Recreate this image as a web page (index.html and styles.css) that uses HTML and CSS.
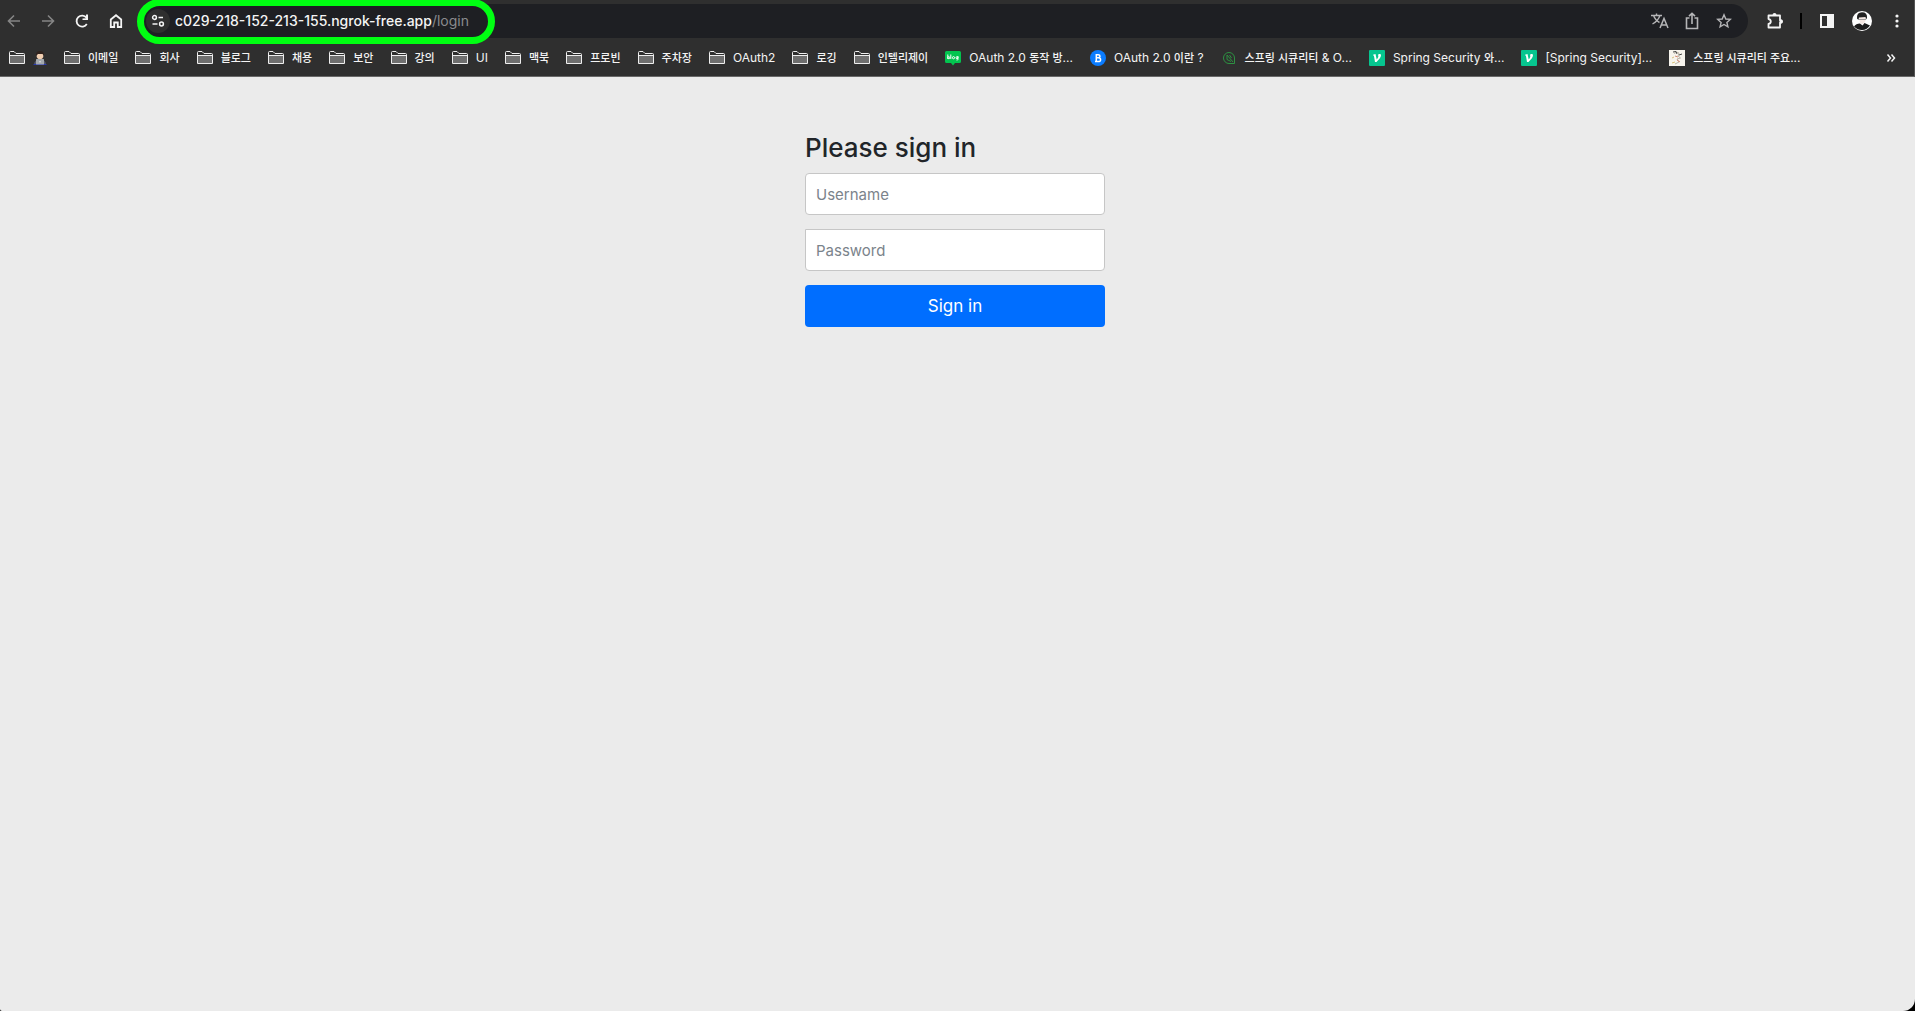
FILE: index.html
```html
<!DOCTYPE html>
<html lang="ko">
<head>
<meta charset="utf-8">
<title>Please sign in</title>
<link rel="stylesheet" href="styles.css">
</head>
<body>
<svg class="defs" aria-hidden="true">
  <symbol id="folder" viewBox="0 0 16 14">
    <path d="M1 5H15V12.500H1Z" fill="#6f6f6f"/>
    <path d="M.5 12.500V1.500Q.5.500 1.500.500H5L7 2.500H14.500Q15.500 2.500 15.500 3.500V12.500H.5ZM.5 4.500H15.500" fill="none" stroke="#eee"/>
  </symbol>
  <symbol id="velog" viewBox="0 0 16 16">
    <rect width="16" height="16" rx="1" fill="#06c58f"/>
    <path d="M4 4.700L6.500 4 7.700 9.500C9.300 7.500 9.800 6.300 9 5 9.500 3.700 12 3.500 12 5.300 12 7.500 9.500 10 7.500 12H6L4.900 5.600H4Z" fill="#fff"/>
  </symbol>
</svg>
<header class="browser">
  <div class="toolbar">
    <nav class="nav" aria-label="Navigation">
      <button class="icon dim" aria-label="Back"><svg viewBox="0 0 16 16"><path d="M14 8H2.500M8 2.500L2.500 8 8 13.500"/></svg></button>
      <button class="icon dim" aria-label="Forward"><svg viewBox="0 0 16 16"><path d="M2 8H13.500M8 2.500L13.500 8 8 13.500"/></svg></button>
      <button class="icon" aria-label="Reload"><svg viewBox="0 0 16 16"><path d="M12.800 11A5.500 5.500 0 1 1 12.500 4.800L13.500 6" stroke-width="1.800"/><path d="M14 1.500V7H8.500V5.500L12 5.200V1.500Z" fill="currentColor" stroke="none"/></svg></button>
      <button class="icon" aria-label="Home"><svg viewBox="0 0 16 16"><path d="M2.800 6.500L8 2.200 13.200 6.500V14H9.800V9.500H6.200V14H2.800Z" stroke-width="1.800"/></svg></button>
    </nav>
    <div class="omnibox">
      <button class="site-info" aria-label="Site information"><svg viewBox="0 0 16 16"><path d="M8.500 4.500H13M2.500 11H7.500" stroke-width="1.600"/><circle cx="4.500" cy="4.500" r="1.900"/><circle cx="11.500" cy="11" r="1.900"/></svg></button>
      <div class="url" role="textbox" aria-label="Address" contenteditable="true" spellcheck="false"><span class="host">c029-218-152-213-155.ngrok-free.app</span><span class="path">/login</span></div>
      <div class="actions">
        <button class="icon" aria-label="Translate"><svg class="wide" viewBox="0 0 18 18"><path d="M0 3.500H11M5.500 1.500V3.500M2.500 3.500Q4.500 8.500 8.500 10.500M9 3.500Q7 9 1.500 12" stroke-width="1.400"/><path d="M9 16L13 6.500 17 16M10.500 13H15.500" stroke-width="1.500"/></svg></button>
        <button class="icon" aria-label="Share"><svg class="wide" viewBox="0 0 18 18"><path d="M6.500 6H3.500V16.500H14.500V6H11.500M9 12V1.500M6 4.200L9 1.300 12 4.200"/></svg></button>
        <button class="icon" aria-label="Bookmark"><svg viewBox="0 0 16 16"><path d="M8 1.800L9.800 6 14.300 6.400 10.900 9.400 11.900 13.800 8 11.500 4.100 13.800 5.100 9.400 1.700 6.400 6.200 6Z" stroke-width="1.400"/></svg></button>
      </div>
      <span class="highlight"></span>
    </div>
    <div class="tools">
      <button class="icon" aria-label="Extensions"><svg class="wide" viewBox="0 0 18 18"><path d="M2.500 3.500H14V8.500H15.500V10.500H14V15.500H2.500V12Q4.800 11.500 4.800 9.500T2.500 7Z" stroke-width="1.800" stroke-linejoin="round"/><path d="M6.500 3Q6.500 1 8.500 1T10.500 3ZM14.500 7.500Q17 7.500 17 9.500T14.500 11.500Z" fill="currentColor" stroke="none"/></svg></button>
      <span class="divider"></span>
      <button class="icon" aria-label="Side panel"><svg viewBox="0 0 16 16"><path d="M1 1H15V15H1ZM3 3V13H8V3Z" fill="currentColor" fill-rule="evenodd" stroke="none"/></svg></button>
      <button class="icon avatar" aria-label="Profile"><svg viewBox="0 0 20 20"><circle cx="10" cy="10" r="10" fill="#fff" stroke="none"/><path d="M2 15.500Q4 12.500 8 12.500L10.500 14.500 12.500 12 18 14.500A10 10 0 0 1 2 15.500Z" fill="#1b1b1b" stroke="none"/><path d="M7 6H13.500L13.500 10 11 13.500 8 12Z" fill="#f4e7e2" stroke="none"/><path d="M5 7.500Q4.500 1.200 10 1.200T15 7L14 8.500 13.500 6 7 6.500 6.500 9Z" fill="#222" stroke="none"/><path d="M7 8.500H14" stroke="#888" stroke-width=".8"/></svg></button>
      <button class="icon" aria-label="Menu"><svg viewBox="0 0 16 16"><g fill="currentColor" stroke="none"><circle cx="8" cy="3" r="1.600"/><circle cx="8" cy="8" r="1.600"/><circle cx="8" cy="13" r="1.600"/></g></svg></button>
    </div>
  </div>
  <nav class="bookmarks" aria-label="Bookmarks">
    <a href="#" aria-label="Developer"><svg class="mark"><use href="#folder"/></svg><svg class="person" viewBox="0 0 14 14"><path d="M1 14Q1 8.500 7 8.500T13 14Z" fill="#535768"/><path d="M.5 13.500H13.500" stroke="#2638b0"/><circle cx="7" cy="4.800" r="3.400" fill="#f1cfb2"/><path d="M3 5Q2.500 0 7 0T11 5L9.500 3H5Z" fill="#30231e"/><rect x="3" y="8" width="8" height="5.500" rx=".5" fill="#a3a8ad"/><circle cx="7" cy="10.700" r=".8" fill="#e5e5e5"/></svg></a>
    <a href="#"><svg class="mark"><use href="#folder"/></svg><span class="ko">이메일</span></a>
    <a href="#"><svg class="mark"><use href="#folder"/></svg><span class="ko">회사</span></a>
    <a href="#"><svg class="mark"><use href="#folder"/></svg><span class="ko">블로그</span></a>
    <a href="#"><svg class="mark"><use href="#folder"/></svg><span class="ko">채용</span></a>
    <a href="#"><svg class="mark"><use href="#folder"/></svg><span class="ko">보안</span></a>
    <a href="#"><svg class="mark"><use href="#folder"/></svg><span class="ko">강의</span></a>
    <a href="#"><svg class="mark"><use href="#folder"/></svg><span>UI</span></a>
    <a href="#"><svg class="mark"><use href="#folder"/></svg><span class="ko">맥북</span></a>
    <a href="#"><svg class="mark"><use href="#folder"/></svg><span class="ko">프로빈</span></a>
    <a href="#"><svg class="mark"><use href="#folder"/></svg><span class="ko">주차장</span></a>
    <a href="#"><svg class="mark"><use href="#folder"/></svg><span>OAuth2</span></a>
    <a href="#"><svg class="mark"><use href="#folder"/></svg><span class="ko">로깅</span></a>
    <a href="#"><svg class="mark"><use href="#folder"/></svg><span class="ko">인텔리제이</span></a>
    <a href="#"><svg class="favicon" viewBox="0 0 16 16"><path d="M1.500 1H14.500Q16 1 16 2.500V11.500Q16 13 14.500 13H10L8 15.500 6 13H1.500Q0 13 0 11.500V2.500Q0 1 1.500 1Z" fill="#03c44f"/><path d="M2.800 4.500V9M5.800 4.500V9M12.900 6V9.500Q12.900 10.300 11.500 10" fill="none" stroke="#fff"/><g fill="none" stroke="#fff"><circle cx="3.800" cy="7.700" r="1"/><circle cx="8.500" cy="7.700" r="1.100"/><circle cx="12" cy="7.700" r="1"/></g></svg><span>OAuth 2.0 <span class="ko">동작 방</span>...</span></a>
    <a href="#"><svg class="favicon" viewBox="0 0 16 16"><circle cx="8" cy="8" r="8" fill="#0a7cff"/><path d="M6.300 4V12M6 4.700H8.200Q10 4.700 10 6.200T8.200 7.800H6.500M8.200 7.800Q10.600 7.800 10.600 9.700T8.200 11.500H5" fill="none" stroke="#fff" stroke-width="1.500"/></svg><span>OAuth 2.0 <span class="ko">이란</span> ?</span></a>
    <a href="#"><svg class="favicon" viewBox="0 0 16 16"><path d="M13.500 13.500H8A5.500 5.500 0 1 1 13.500 8ZM6 5V9.500M6 5L12 12M6 9.500L10 11.500M8.500 5L10.500 8" fill="none" stroke="#2d9142"/></svg><span><span class="ko">스프링 시큐리티</span> &amp; O...</span></a>
    <a href="#"><svg class="favicon"><use href="#velog"/></svg><span>Spring Security <span class="ko">와</span>...</span></a>
    <a href="#"><svg class="favicon"><use href="#velog"/></svg><span>[Spring Security]...</span></a>
    <a href="#"><svg class="favicon" viewBox="0 0 16 16"><rect width="16" height="16" fill="#f7f4ed"/><path d="M5 3.500Q8 1 10 3L9 6 11.500 8 8 9 10 12 6 14" fill="none" stroke="#b9b3a6"/><path d="M4 2L7 1.500 8 4M10 5L13 4" fill="none" stroke="#444"/><path d="M6 6L9 7M8 10L11 12" stroke="#d78b76"/><path d="M3 8L5 7M3 13L6 12" stroke="#d9c27a"/></svg><span><span class="ko">스프링 시큐리티 주요</span>...</span></a>
    <button class="more" aria-label="More bookmarks"><svg viewBox="0 0 10 10"><path d="M1.500 1.500L4.500 5 1.500 8.500M5.500 1.500L8.500 5 5.500 8.500"/></svg></button>
  </nav>
</header>
<main class="page">
  <form class="signin">
    <h1>Please sign in</h1>
    <input type="text" aria-label="Username" placeholder="Username">
    <input class="joined" type="password" aria-label="Password" placeholder="Password">
    <button class="submit" type="submit">Sign in</button>
  </form>
</main>
</body>
</html>
```
FILE: styles.css
```css
* { box-sizing: border-box; }
body {
  margin: 0;
  min-height: 100vh;
  display: flex;
  flex-direction: column;
  background: #000;
  font-family: Inter, "Noto Sans CJK KR", sans-serif;
  overflow-x: hidden;
}
button { border: 0; padding: 0; background: none; color: inherit; font: inherit; }
.defs { position: absolute; width: 0; height: 0; }

.browser {
  background: #2f2f2f;
  color: #f4f4f4;
  border-right: 1px solid #555;
  border-bottom: 1px solid #686868;
}
.toolbar { display: flex; align-items: center; height: 42px; padding: 4px 9px 4px 6px; }
.nav { display: flex; gap: 18px; padding-right: 18px; }
.icon { display: flex; align-items: center; justify-content: center; width: 16px; height: 20px; }
.icon svg { width: 16px; height: 16px; flex: none; fill: none; stroke: currentColor; stroke-width: 1.6px; }
.icon .wide { width: 18px; height: 18px; }
.dim { color: #858585; }

.omnibox {
  position: relative;
  flex: 1;
  display: flex;
  align-items: center;
  height: 34px;
  padding: 0 16px 0 4px;
  border-radius: 17px;
  background: #1e1f23;
}
.site-info {
  display: flex;
  align-items: center;
  justify-content: center;
  width: 24px;
  height: 24px;
  border-radius: 50%;
  background: #2f2f2f;
}
.site-info svg { width: 16px; height: 16px; fill: none; stroke: currentColor; stroke-width: 1.5px; }
.url { flex: 1; padding-left: 5px; font-size: 14px; line-height: 20px; white-space: nowrap; outline: 0; }
.host { font-weight: 500; }
.path { color: #8a8b8e; }
.actions { display: flex; gap: 16px; color: #b5b5b7; }
.highlight {
  position: absolute;
  top: -5px;
  left: -5px;
  width: 358px;
  height: 45px;
  border: 7px solid #00ff12;
  border-radius: 23px;
  pointer-events: none;
}
.tools { display: flex; align-items: center; gap: 17px; padding-left: 19px; }
.divider { width: 2px; height: 16px; background: #000; }
.icon.avatar { width: 20px; }
.icon.avatar svg { width: 20px; height: 20px; }

.bookmarks {
  display: flex;
  align-items: center;
  gap: 17px;
  height: 34px;
  padding: 0 18px 2px 9px;
  font-size: 12px;
  line-height: 16px;
}
.bookmarks a { display: flex; align-items: center; gap: 8px; color: inherit; text-decoration: none; white-space: nowrap; }
.ko { font-size: 11px; font-weight: 500; }
.mark { width: 16px; height: 14px; }
.favicon { width: 16px; height: 16px; }
.person { width: 14px; height: 14px; }
.more { margin-left: auto; }
.more svg { display: block; width: 10px; height: 10px; fill: none; stroke: currentColor; stroke-width: 1.5px; }

.page { flex: 1; padding: 52px 25px 52px 20px; background: #ebebeb; border-radius: 0 0 12px 2px; }
.signin { display: flex; flex-direction: column; max-width: 300px; margin: 0 auto; }
.signin h1 { margin: 0 0 6px; font-size: 26px; line-height: 38px; font-weight: 500; color: #212529; }
.signin input {
  height: 42px;
  margin-bottom: 14px;
  padding: 0 10px;
  border: 1px solid #c6c6c6;
  border-radius: 4px;
  background: #fff;
  font-family: inherit;
  font-size: 15px;
  color: #212529;
}
.signin input::placeholder { color: #7b838b; opacity: 1; }
.signin .joined { border-radius: 0 0 4px 4px; }
.submit { height: 42px; border-radius: 4px; background: #006eff; color: #fff; font-size: 17px; }
```
